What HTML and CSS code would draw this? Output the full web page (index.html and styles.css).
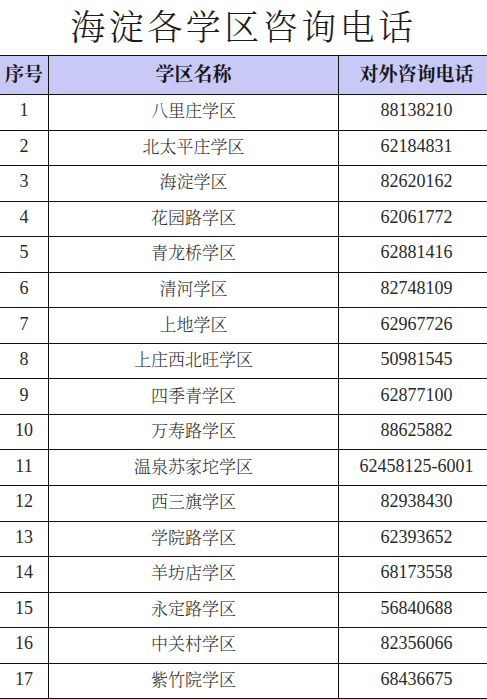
FILE: index.html
```html
<!DOCTYPE html>
<html lang="zh-CN">
<head>
<meta charset="utf-8">
<title>海淀各学区咨询电话</title>
<link rel="stylesheet" href="styles.css">
</head>
<body>
<h1 class="title">海淀各学区咨询电话</h1>
<table class="grid">
  <colgroup>
    <col class="c-no">
    <col class="c-name">
    <col class="c-tel">
  </colgroup>
  <thead>
    <tr><th>序号</th><th>学区名称</th><th>对外咨询电话</th></tr>
  </thead>
  <tbody>
    <tr><td>1</td><td>八里庄学区</td><td>88138210</td></tr>
    <tr><td>2</td><td>北太平庄学区</td><td>62184831</td></tr>
    <tr><td>3</td><td>海淀学区</td><td>82620162</td></tr>
    <tr><td>4</td><td>花园路学区</td><td>62061772</td></tr>
    <tr><td>5</td><td>青龙桥学区</td><td>62881416</td></tr>
    <tr><td>6</td><td>清河学区</td><td>82748109</td></tr>
    <tr><td>7</td><td>上地学区</td><td>62967726</td></tr>
    <tr><td>8</td><td>上庄西北旺学区</td><td>50981545</td></tr>
    <tr><td>9</td><td>四季青学区</td><td>62877100</td></tr>
    <tr><td>10</td><td>万寿路学区</td><td>88625882</td></tr>
    <tr><td>11</td><td>温泉苏家坨学区</td><td>62458125-6001</td></tr>
    <tr><td>12</td><td>西三旗学区</td><td>82938430</td></tr>
    <tr><td>13</td><td>学院路学区</td><td>62393652</td></tr>
    <tr><td>14</td><td>羊坊店学区</td><td>68173558</td></tr>
    <tr><td>15</td><td>永定路学区</td><td>56840688</td></tr>
    <tr><td>16</td><td>中关村学区</td><td>82356066</td></tr>
    <tr><td>17</td><td>紫竹院学区</td><td>68436675</td></tr>
  </tbody>
</table>
</body>
</html>
```
FILE: styles.css
```css
html, body {
  margin: 0;
  padding: 0;
  background: #ffffff;
  overflow: hidden;
}
body {
  width: 487px;
  height: 699px;
  font-family: "Liberation Serif", "Noto Serif CJK SC", "Noto Sans CJK SC", serif;
  color: #1a1a1a;
}
.title {
  margin: 0;
  height: 55px;
  display: flex;
  align-items: flex-start;
  justify-content: center;
  font-size: 35px;
  line-height: normal;
  font-weight: 300;
  letter-spacing: 3.5px;
  color: #1c1c1c;
  font-family: "Noto Serif CJK SC", "Noto Sans CJK SC", serif;
}
.grid {
  border-collapse: collapse;
  table-layout: fixed;
  width: 495px;
  margin-left: -1px;
}
.c-no { width: 49px; }
.c-name { width: 290px; }
.c-tel { width: 156px; }
.grid th,
.grid td {
  border: 1px solid #111;
  padding: 0 0 4px 0;
  text-align: center;
  vertical-align: middle;
  white-space: nowrap;
  line-height: 22px;
}
.grid th {
  height: 34px;
  background: #c9c9f7;
  font-size: 19px;
  font-weight: 700;
  color: #161616;
  font-family: "Noto Serif CJK SC", "Noto Sans CJK SC", serif;
}
.grid td {
  height: 30.56px;
  font-size: 18px;
  font-weight: 400;
  color: #2a2a2a;
}
.grid td:nth-child(2) {
  font-family: "Noto Serif CJK SC", "Noto Sans CJK SC", serif;
  font-weight: 300;
  font-size: 17px;
}
```
